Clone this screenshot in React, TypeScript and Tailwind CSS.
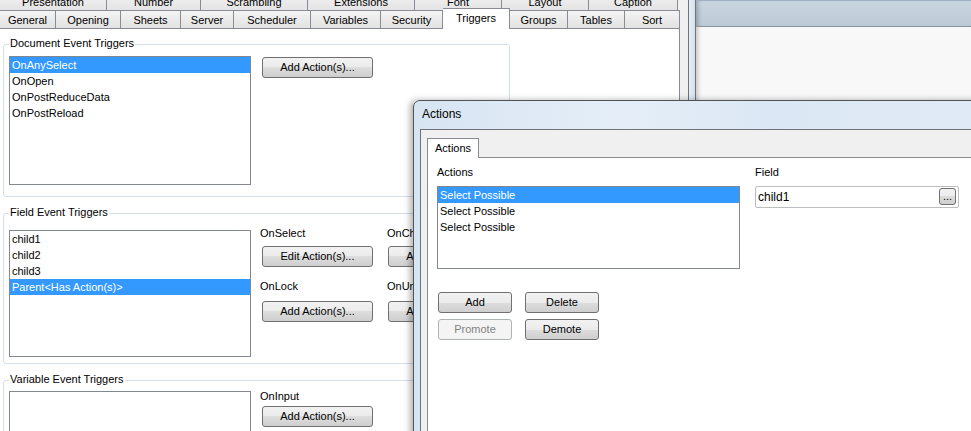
import React from "react";

const row1: [string, string][] = [
  ["Presentation", "w-[107px]"],
  ["Number", "w-[94px]"],
  ["Scrambling", "w-[107px]"],
  ["Extensions", "w-[107px]"],
  ["Font", "w-[87px]"],
  ["Layout", "w-[87px]"],
  ["Caption", "w-[89px]"],
];

const row2: [string, string][] = [
  ["General", "w-[56px]"],
  ["Opening", "w-[65px]"],
  ["Sheets", "w-[60px]"],
  ["Server", "w-[53px]"],
  ["Scheduler", "w-[77px]"],
  ["Variables", "w-[70px]"],
  ["Security", "w-[62px]"],
  ["Triggers", "w-[67px]"],
  ["Groups", "w-[58px]"],
  ["Tables", "w-[57px]"],
  ["Sort", "w-[55px]"],
];

function Btn({
  children,
  className = "",
  disabled = false,
}: {
  children: React.ReactNode;
  className?: string;
  disabled?: boolean;
}) {
  return (
    <div
      className={`flex shrink-0 items-center justify-center rounded-[3px] border text-[11px] leading-[13px] ${
        disabled
          ? "border-[#adb2b5] bg-[#f4f4f4] text-[#838383]"
          : "border-[#707070] bg-[linear-gradient(to_bottom,#f2f2f2_0%,#ebebeb_50%,#dddddd_50%,#cfcfcf_100%)] text-black"
      } ${className}`}
    >
      {children}
    </div>
  );
}

function ListBox({
  items,
  selected,
  className = "",
}: {
  items: string[];
  selected: number;
  className?: string;
}) {
  return (
    <div className={`shrink-0 border border-[#828790] bg-white ${className}`}>
      {items.map((t, i) => (
        <div
          key={i}
          className={`h-[16px] whitespace-nowrap pl-[2px] text-[11px] leading-[17px] ${
            i === selected ? "bg-[#3399ff] text-white" : "text-black"
          }`}
        >
          {t}
        </div>
      ))}
    </div>
  );
}

function Group({
  label,
  className = "",
  children,
}: {
  label: string;
  className?: string;
  children: React.ReactNode;
}) {
  return (
    <div className={`relative shrink-0 rounded-[3px] border border-[#d5dfe5] ${className}`}>
      <span className="absolute -top-[8px] left-[5px] whitespace-nowrap bg-white px-px text-[11px] leading-[13px] text-black">
        {label}
      </span>
      {children}
    </div>
  );
}

function Label({ children }: { children: React.ReactNode }) {
  return <div className="whitespace-nowrap text-[11px] leading-[13px] text-black">{children}</div>;
}

export default function App() {
  return (
    <div className="relative flex h-[431px] w-[971px] overflow-hidden bg-[#f0f0f0] font-['Liberation_Sans',Arial,sans-serif] text-black">
      {/* Main Document Properties window */}
      <div className="flex w-[688px] shrink-0 flex-col bg-[#f0f0f0]">
        {/* tab row 1 (partially scrolled off top) */}
        <div className="-mt-[10px] flex h-[20px] shrink-0">
          {row1.map(([t, w]) => (
            <div
              key={t}
              className={`${w} shrink-0 border-r border-t border-[#898c95] bg-[linear-gradient(to_bottom,#f4f4f4,#e4e4e4)] pt-[5px] text-center text-[11px] leading-[13px]`}
            >
              {t}
            </div>
          ))}
        </div>
        {/* tab row 2 */}
        <div className="flex h-[18px] shrink-0">
          {row2.map(([t, w]) =>
            t === "Triggers" ? (
              <div
                key={t}
                className={`${w} relative z-10 -mb-px h-[21px] shrink-0 self-end border-r border-t border-[#898c95] bg-white pt-[3px] text-center text-[11px] leading-[13px]`}
              >
                {t}
              </div>
            ) : (
              <div
                key={t}
                className={`${w} shrink-0 border-r border-t border-[#898c95] bg-[linear-gradient(to_bottom,#f4f4f4,#e2e2e2)] pt-[3px] text-center text-[11px] leading-[13px]`}
              >
                {t}
              </div>
            )
          )}
        </div>
        {/* tab page */}
        <div className="flex w-[680px] flex-1 flex-col border-r border-t border-[#898c95] bg-white pl-[3px] pt-[15px]">
          <Group label="Document Event Triggers" className="h-[153px] w-[507px]">
            <div className="flex items-start pl-[5px] pt-[11px]">
              <ListBox
                items={["OnAnySelect", "OnOpen", "OnPostReduceData", "OnPostReload"]}
                selected={0}
                className="h-[129px] w-[242px]"
              />
              <Btn className="ml-[11px] mt-px h-[21px] w-[111px]">Add Action(s)...</Btn>
            </div>
          </Group>

          <Group label="Field Event Triggers" className="mt-[16px] h-[151px] w-[507px]">
            <div className="flex items-start pl-[5px] pt-[16px]">
              <ListBox
                items={["child1", "child2", "child3", "Parent<Has Action(s)>"]}
                selected={3}
                className="h-[127px] w-[242px]"
              />
              <div className="-mt-[3px] ml-[9px] flex w-[127px] flex-col">
                <Label>OnSelect</Label>
                <Btn className="ml-[2px] mt-[6px] h-[21px] w-[111px]">Edit Action(s)...</Btn>
                <div className="mt-[13px]">
                  <Label>OnLock</Label>
                </div>
                <Btn className="ml-[2px] mt-[8px] h-[21px] w-[111px]">Add Action(s)...</Btn>
              </div>
              <div className="-mt-[3px] flex w-[115px] flex-col">
                <Label>OnChange</Label>
                <Btn className="ml-px mt-[6px] h-[21px] w-[111px]">Add Action(s)...</Btn>
                <div className="mt-[13px]">
                  <Label>OnUnlock</Label>
                </div>
                <Btn className="ml-px mt-[8px] h-[21px] w-[111px]">Add Action(s)...</Btn>
              </div>
            </div>
          </Group>

          <Group label="Variable Event Triggers" className="mt-[16px] h-[100px] w-[507px]">
            <div className="flex items-start pl-[5px] pt-[10px]">
              <ListBox items={[]} selected={-1} className="h-[80px] w-[242px]" />
              <div className="-mt-px ml-[9px] flex w-[127px] flex-col">
                <Label>OnInput</Label>
                <Btn className="ml-[2px] mt-[3px] h-[21px] w-[111px]">Add Action(s)...</Btn>
              </div>
            </div>
          </Group>
        </div>
      </div>

      {/* main window right frame */}
      <div className="w-[8px] shrink-0 border-x border-[#6f7378] bg-[linear-gradient(to_right,#e6eef8,#d3e0ee)]" />

      {/* background window */}
      <div className="flex flex-1 flex-col border-t border-[#9fb0c2]">
        <div className="h-[26px] shrink-0 border-b border-[#8c959c] bg-[linear-gradient(to_bottom,#c9d5df,#bccad5)] shadow-[inset_5px_0_4px_-3px_rgba(0,0,0,0.25)]" />
        <div className="flex-1 bg-[#f8f8f8] shadow-[inset_5px_0_4px_-3px_rgba(0,0,0,0.2)]" />
      </div>

      {/* Actions dialog (window over the others) */}
      <div className="absolute left-[413px] top-[100px] flex h-[345px] w-[600px] flex-col rounded-tl-[7px] border border-[#505458] bg-[linear-gradient(to_right,#d7e4f2,#e5eef8_35%,#dbe7f4_60%,#e2ebf6)] shadow-[-3px_0_6px_rgba(0,0,0,0.3)]">
        <div className="h-[28px] shrink-0 pl-[8px] pt-[6px] text-[12px] leading-[15px] text-black">Actions</div>
        <div className="ml-[6px] flex flex-1 flex-col border-l border-t border-[#6d7379] bg-[#f0f0f0] pl-[6px] pt-[8px]">
          <div className="flex shrink-0">
            <div className="relative z-10 -mb-px h-[20px] w-[52px] border border-b-0 border-[#898c95] bg-white pl-[7px] pt-[3px] text-[11px] leading-[13px]">
              Actions
            </div>
          </div>
          <div className="flex flex-1 border-l border-t border-[#898c95] bg-white pl-[9px] pt-[8px]">
            <div className="flex flex-col">
              <Label>Actions</Label>
              <ListBox
                items={["Select Possible", "Select Possible", "Select Possible"]}
                selected={0}
                className="mt-[7px] h-[83px] w-[303px]"
              />
              <div className="mt-[23px] flex gap-[13px] pl-px">
                <Btn className="h-[21px] w-[74px]">Add</Btn>
                <Btn className="h-[21px] w-[74px]">Delete</Btn>
              </div>
              <div className="mt-[6px] flex gap-[13px] pl-px">
                <Btn disabled className="h-[21px] w-[74px]">
                  Promote
                </Btn>
                <Btn className="h-[21px] w-[74px]">Demote</Btn>
              </div>
            </div>
            <div className="ml-[15px] flex flex-col">
              <Label>Field</Label>
              <div className="mt-[7px] flex h-[22px] w-[204px] items-start justify-between rounded-[2px] border border-[#bdbdbd] bg-white">
                <span className="pl-[2px] pt-[2px] text-[12px] leading-[16px]">child1</span>
                <Btn className="mr-[2px] mt-px h-[17px] w-[17px] items-end pb-px text-[10px] leading-[8px]">...</Btn>
              </div>
            </div>
          </div>
        </div>
      </div>
    </div>
  );
}
